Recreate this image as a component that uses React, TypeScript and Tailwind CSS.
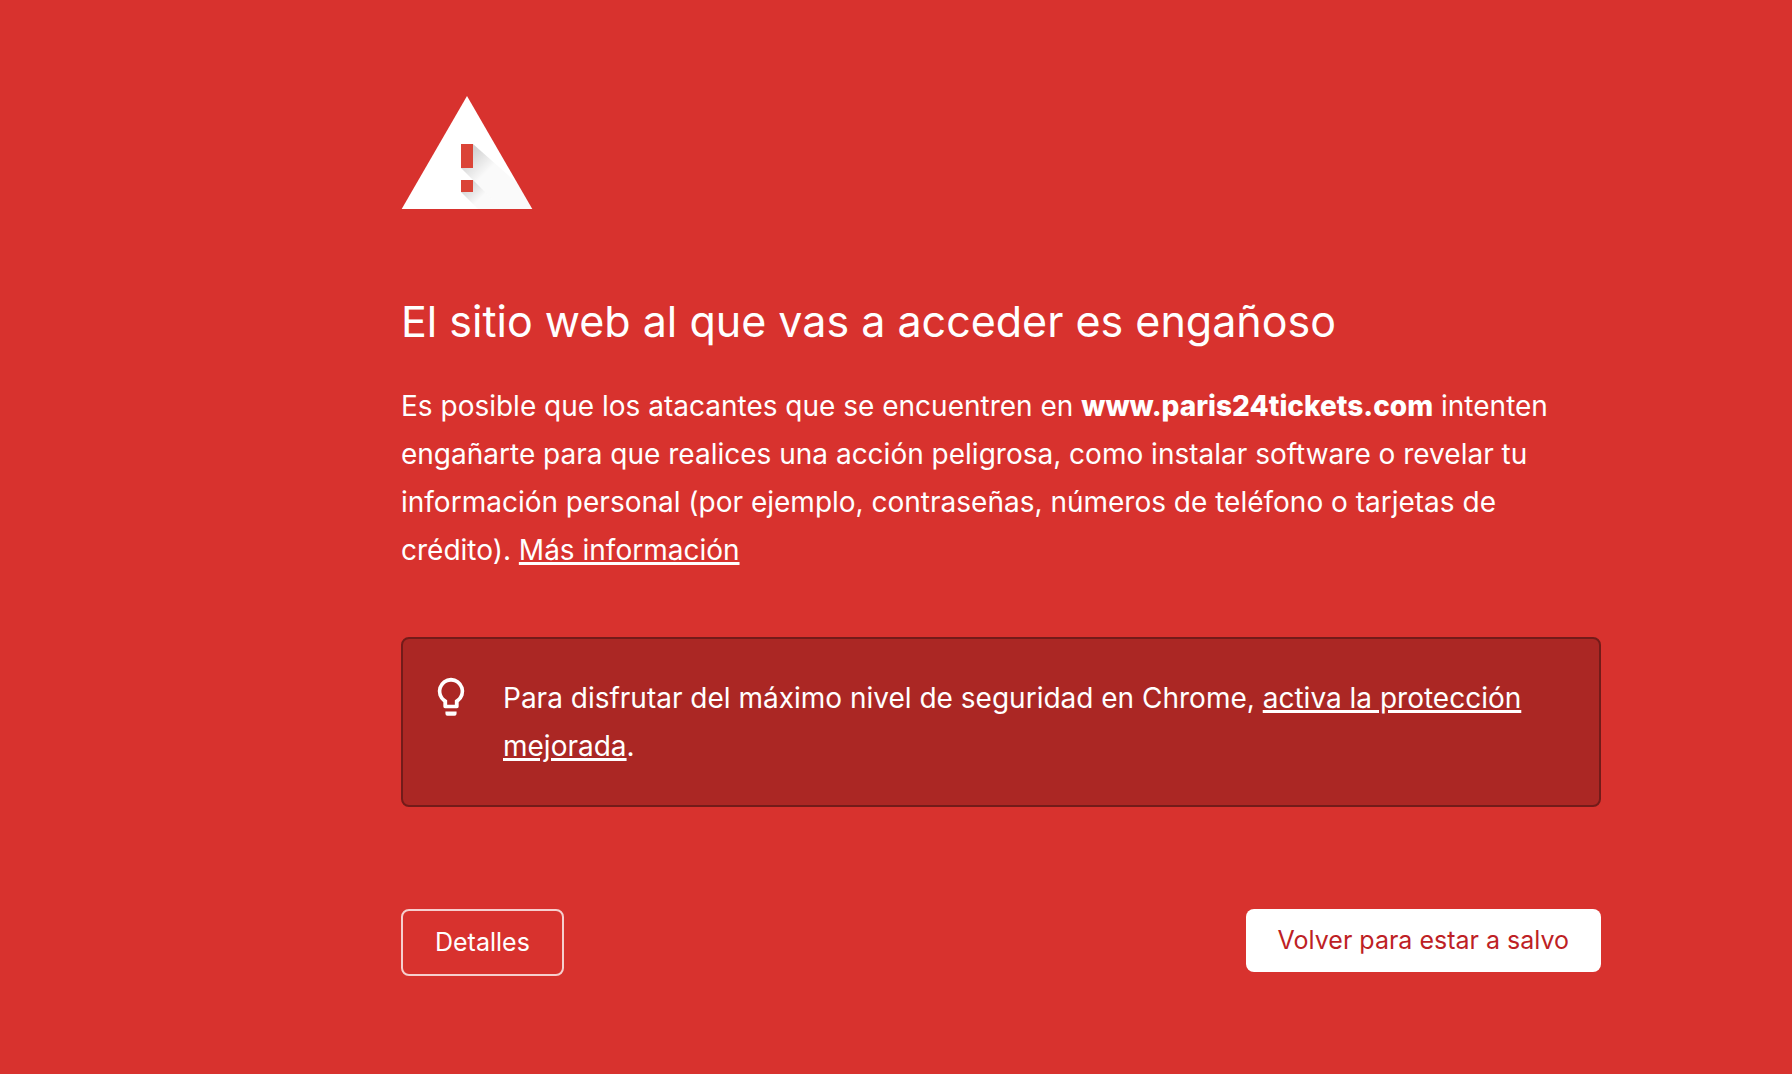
import type { ReactNode } from "react";

function WarningIcon() {
  return (
    <svg width="144" height="144" viewBox="0 0 144 144" className="-ml-[6px] block" aria-hidden="true">
      <defs>
        <linearGradient id="shade-bar" gradientUnits="userSpaceOnUse" x1="73" y1="73" x2="91" y2="91">
          <stop offset="0" stopColor="#000" stopOpacity="0.18" />
          <stop offset="1" stopColor="#000" stopOpacity="0.02" />
        </linearGradient>
        <linearGradient id="shade-dot" gradientUnits="userSpaceOnUse" x1="87" y1="87" x2="101" y2="101">
          <stop offset="0" stopColor="#000" stopOpacity="0.18" />
          <stop offset="1" stopColor="#000" stopOpacity="0.02" />
        </linearGradient>
      </defs>
      <path d="M6.700 127h130.600L72 14z" fill="#fff" />
      <path d="M78 62l44.600 39.600L137.300 127H107L66 86h12z" fill="url(#shade-bar)" />
      <path d="M78 98l29 29H83l-17-17h12z" fill="url(#shade-dot)" />
      <path d="M66 62h12v24H66zM66 98h12v12H66z" fill="#db4437" />
    </svg>
  );
}

function BulbIcon() {
  return (
    <svg width="46" height="46" viewBox="0 0 24 24" fill="#fff" className="shrink-0" aria-hidden="true">
      <path d="M9.100 19.600h5.800v1.200q0 1-1 1h-3.800q-1 0-1-1zM12 2a7 7 0 0 0-4 12.700V17q0 .900.900.900h6.200q.900 0 .900-.900v-2.300A7 7 0 0 0 12 2zm2.900 11.100L14 13.700V16h-4v-2.300l-.900-.600A5 5 0 1 1 14.900 13.100z" />
    </svg>
  );
}

function TextLink({ children }: { children: ReactNode }) {
  return (
    <a href="#" className="underline decoration-[3px] underline-offset-2">
      {children}
    </a>
  );
}

export default function App() {
  return (
    <div className="min-h-screen bg-[#d8322e] pt-[82px] pb-24 pl-[401px] pr-8 font-['Inter',sans-serif] text-white">
      <main className="w-full max-w-[1200px]">
        <WarningIcon />

        <h1 className="mt-[66px] text-[43px] leading-[58px]">
          El sitio web al que vas a acceder es engañoso
        </h1>
        <p className="mt-8 pr-8 text-[28px] leading-[48px]">
          Es posible que los atacantes que se encuentren en <strong className="font-extrabold">www.paris24tickets.com</strong>{" "}
          intenten engañarte para que realices una acción peligrosa, como instalar software o revelar tu información
          personal (por ejemplo, contraseñas, números de teléfono o tarjetas de crédito).{" "}
          <TextLink>Más información</TextLink>
        </p>

        {/* Enhanced protection hint */}
        <div className="mt-[63px] flex items-start gap-[29px] rounded-lg border-2 border-[#731b19] bg-[#ab2724] py-[35px] pr-10 pl-[25px]">
          <BulbIcon />
          <p className="text-[28px] leading-[48px]">
            Para disfrutar del máximo nivel de seguridad en Chrome, <TextLink>activa la protección mejorada</TextLink>.
          </p>
        </div>

        {/* Actions */}
        <div className="mt-[102px] flex items-start justify-between text-[25px] leading-[31px]">
          <button type="button" className="rounded-lg border-2 border-[#f6cfce] px-8 py-4">
            Detalles
          </button>
          <button type="button" className="rounded-lg bg-white px-8 py-4 text-[#be1f25]">
            Volver para estar a salvo
          </button>
        </div>
      </main>
    </div>
  );
}
